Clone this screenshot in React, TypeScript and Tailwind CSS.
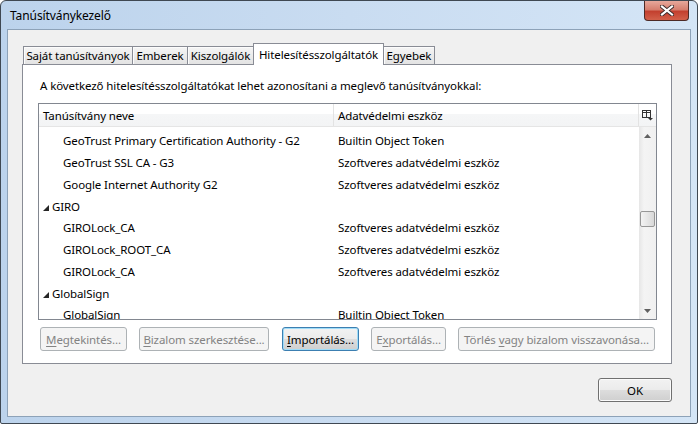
import React from "react";

type Row =
  | { kind: "group"; name: string }
  | { kind: "cert"; name: string; token: string };

const rows: Row[] = [
  { kind: "cert", name: "GeoTrust Primary Certification Authority - G2", token: "Builtin Object Token" },
  { kind: "cert", name: "GeoTrust SSL CA - G3", token: "Szoftveres adatvédelmi eszköz" },
  { kind: "cert", name: "Google Internet Authority G2", token: "Szoftveres adatvédelmi eszköz" },
  { kind: "group", name: "GIRO" },
  { kind: "cert", name: "GIROLock_CA", token: "Szoftveres adatvédelmi eszköz" },
  { kind: "cert", name: "GIROLock_ROOT_CA", token: "Szoftveres adatvédelmi eszköz" },
  { kind: "cert", name: "GIROLock_CA", token: "Szoftveres adatvédelmi eszköz" },
  { kind: "group", name: "GlobalSign" },
  { kind: "cert", name: "GlobalSign", token: "Builtin Object Token" },
];

const tabs = [
  { label: "Saját tanúsítványok", w: "w-[110px]" },
  { label: "Emberek", w: "w-[56px]" },
  { label: "Kiszolgálók", w: "w-[67px]" },
  { label: "Hitelesítésszolgáltatók", w: "w-[131px]", active: true },
  { label: "Egyebek", w: "w-[52px]" },
];

function Key({ children }: { children: React.ReactNode }) {
  return <span className="underline underline-offset-2">{children}</span>;
}

function WinButton({
  width,
  disabled,
  focused,
  className = "",
  children,
}: {
  width: string;
  disabled?: boolean;
  focused?: boolean;
  className?: string;
  children: React.ReactNode;
}) {
  if (disabled) {
    return (
      <div
        className={`${width} ${className} h-[24px] flex items-center justify-center whitespace-nowrap rounded-[3px] border border-[#adb2b5] bg-[#f4f4f4] text-[#838383]`}
      >
        {children}
      </div>
    );
  }
  return (
    <div
      className={`${width} ${className} h-[24px] flex items-center justify-center whitespace-nowrap rounded-[3px] border ${
        focused
          ? "border-[#3c7fb1] shadow-[inset_0_0_0_1px_#9fdcf8]"
          : "border-[#707070] shadow-[inset_0_0_0_1px_#fbfbfb]"
      } bg-[linear-gradient(to_bottom,#f2f2f2_0%,#ebebeb_50%,#dddddd_51%,#cfcfcf_100%)] text-black`}
    >
      {children}
    </div>
  );
}

function TitleBar() {
  return (
    <div className="relative h-[28px] flex items-center pl-[9px]">
      <span className="text-[12px] tracking-[-0.1px] text-black">Tanúsítványkezelő</span>
      <div className="absolute top-0 right-[8px] w-[45px] h-[20px] rounded-b-[4px] border border-t-0 border-[#4d2a26] bg-[linear-gradient(to_bottom,#e7a89b_0%,#d67f6f_45%,#c3402f_55%,#d2604a_100%)] flex items-center justify-center">
        <svg width="14" height="11" viewBox="0 0 14 11">
          <path
            d="M2 1.5 L12 9.5 M12 1.5 L2 9.5"
            stroke="#3a2a2a"
            strokeWidth="4"
            strokeLinecap="square"
          />
          <path
            d="M2 1.5 L12 9.5 M12 1.5 L2 9.5"
            stroke="#ffffff"
            strokeWidth="2.2"
            strokeLinecap="square"
          />
        </svg>
      </div>
    </div>
  );
}

function Tabs() {
  return (
    <div className="relative z-10 flex items-end h-[21px] ml-[1px]">
      {tabs.map((t, i) =>
        t.active ? (
          <div
            key={t.label}
            className={`${t.w} -ml-px h-[22px] self-start flex items-start justify-center whitespace-nowrap pt-[3px] border border-b-0 border-[#898c95] bg-white`}
          >
            {t.label}
          </div>
        ) : (
          <div
            key={t.label}
            className={`${t.w} ${i > 0 ? "-ml-px" : ""} h-[18px] flex items-center justify-center whitespace-nowrap border border-b-0 border-[#898c95] bg-[linear-gradient(to_bottom,#f5f5f5,#e3e3e3)] shadow-[inset_1px_1px_0_#fcfcfc]`}
          >
            {t.label}
          </div>
        )
      )}
    </div>
  );
}

function ColumnPicker() {
  return (
    <svg width="11" height="11" viewBox="0 0 11 11">
      <rect x="0.5" y="0.5" width="8" height="7" fill="none" stroke="#333" />
      <line x1="0.5" y1="2.5" x2="8.5" y2="2.5" stroke="#333" />
      <line x1="4.5" y1="0.5" x2="4.5" y2="7.5" stroke="#333" />
      <path d="M6 8 L11 8 L8.5 10.5 Z" fill="#333" />
    </svg>
  );
}

function Scrollbar() {
  return (
    <div className="w-[17px] h-full flex flex-col bg-[linear-gradient(to_right,#e6e6e6,#f4f4f4_30%,#f0f0f0)]">
      <div className="h-[17px] flex items-center justify-center">
        <svg width="7" height="4" viewBox="0 0 7 4">
          <path d="M0 4 L3.5 0 L7 4 Z" fill="#606060" />
        </svg>
      </div>
      <div className="h-[67px]" />
      <div className="mx-[1px] h-[16px] rounded-[2px] border border-[#979797] bg-[linear-gradient(to_right,#f3f3f3,#e6e6e6_50%,#d8d8d8)]" />
      <div className="flex-1" />
      <div className="h-[17px] flex items-center justify-center">
        <svg width="7" height="4" viewBox="0 0 7 4">
          <path d="M0 0 L3.5 4 L7 0 Z" fill="#606060" />
        </svg>
      </div>
    </div>
  );
}

function CertTree() {
  return (
    <div className="ml-[15px] mt-[10px] w-[619px] h-[217px] border border-[#828790] bg-white flex flex-col">
      <div className="h-[23px] flex border-b border-[#e5e5e5] bg-[linear-gradient(to_bottom,#ffffff_0%,#ffffff_45%,#f5f6f7_46%,#f3f4f5_100%)]">
        <div className="w-[295px] pl-[4px] pt-[1px] flex items-center border-r border-[#e3e3e3]">
          Tanúsítvány neve
        </div>
        <div className="w-[305px] pl-[4px] pt-[1px] flex items-center border-r border-[#e3e3e3]">
          Adatvédelmi eszköz
        </div>
        <div className="flex-1 flex items-center justify-center pt-[1px]">
          <ColumnPicker />
        </div>
      </div>
      <div className="flex-1 flex overflow-hidden">
        <div className="flex-1 pt-[3px]">
          {rows.map((r, i) => (
            <div key={i} className="h-[21.75px] flex items-center">
              {r.kind === "group" ? (
                <div className="flex items-center pl-[4px]">
                  <svg width="6" height="6" viewBox="0 0 6 6" className="mt-[3px] mr-[3px]">
                    <path d="M6 0 L6 6 L0 6 Z" fill="#262626" />
                  </svg>
                  <span>{r.name}</span>
                </div>
              ) : (
                <>
                  <div className="w-[295px] pl-[24px] whitespace-nowrap">{r.name}</div>
                  <div className="pl-[4px] whitespace-nowrap">{r.token}</div>
                </>
              )}
            </div>
          ))}
        </div>
        <Scrollbar />
      </div>
    </div>
  );
}

export default function App() {
  return (
    <div className="w-[698px] h-[424px] bg-white font-['Noto_Sans',sans-serif] text-[11.5px] tracking-[-0.1px] leading-[15px] text-black">
      <div className="w-full h-full flex flex-col rounded-t-[6px] rounded-b-[2px] border border-[#3f4852] bg-[linear-gradient(to_right,#bcd3ec,#c9dcf1_50%,#d4e5f6)]">
        <TitleBar />
        <div className="flex-1 mx-[6px] mb-[6px] border border-[#8da2b8] bg-[#f0f0f0] pl-[14px] pt-[13px]">
          <Tabs />
          <div className="w-[650px] h-[300px] border border-[#898c95] bg-white flex flex-col">
            <div className="ml-[17px] mt-[13px] whitespace-nowrap">
              A következő hitelesítésszolgáltatókat lehet azonosítani a meglevő tanúsítványokkal:
            </div>
            <CertTree />
            <div className="flex ml-[17px] mt-[7px]">
              <WinButton width="w-[87px]" disabled>
                <Key>M</Key>egtekintés...
              </WinButton>
              <WinButton width="w-[130px]" disabled className="ml-[12px]">
                <Key>B</Key>izalom szerkesztése...
              </WinButton>
              <WinButton width="w-[77px]" focused className="ml-[13px]">
                <Key>I</Key>mportálás...
              </WinButton>
              <WinButton width="w-[75px]" disabled className="ml-[12px]">
                E<Key>x</Key>portálás...
              </WinButton>
              <WinButton width="w-[197px]" disabled className="ml-[12px]">
                Törlés&nbsp;<Key>v</Key>agy bizalom visszavonása...
              </WinButton>
            </div>
          </div>
          <div className="w-[650px] flex justify-end mt-[14px]">
            <WinButton width="w-[74px]">OK</WinButton>
          </div>
        </div>
      </div>
    </div>
  );
}
